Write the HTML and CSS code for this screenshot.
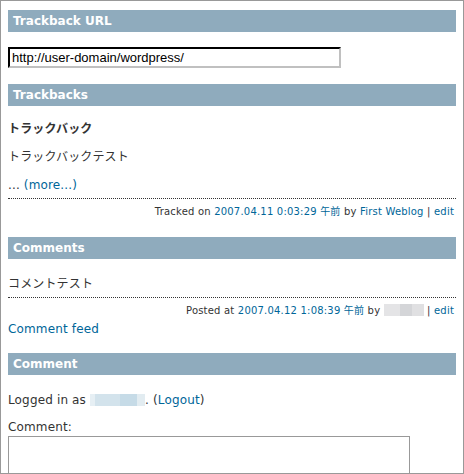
FILE: index.html
```html
<!DOCTYPE html>
<html>
<head>
<meta charset="utf-8">
<link rel="stylesheet" href="styles.css">
</head>
<body>
<div class="frame">
  <h3 class="bar first">Trackback URL</h3>
  <div class="url-row"><input class="url" type="text" value="http://user-domain/wordpress/"></div>

  <h3 class="bar">Trackbacks</h3>
  <div class="entry">
    <div class="tb-title">トラックバック</div>
    <div class="tb-text">トラックバックテスト</div>
    <div class="tb-more">... <a href="#">(more...)</a></div>
  </div>
  <div class="meta">Tracked on <a href="#">2007.04.11 0:03:29 午前</a> by <a href="#">First Weblog</a> | <a href="#">edit</a></div>

  <h3 class="bar">Comments</h3>
  <div class="entry">
    <div class="c-text">コメントテスト</div>
  </div>
  <div class="meta">Posted at <a href="#">2007.04.12 1:08:39 午前</a> by <span class="blur gray"></span> | <a href="#">edit</a></div>
  <div class="feed"><a href="#">Comment feed</a></div>

  <h3 class="bar">Comment</h3>
  <div class="logged">Logged in as <span class="blur blue"></span>. (<a href="#">Logout</a>)</div>
  <div class="label">Comment:</div>
  <textarea class="comment"></textarea>
</div>
</body>
</html>
```

FILE: styles.css
```css
html, body {
  margin: 0;
  padding: 0;
  background: #fff;
}
body {
  width: 464px;
  height: 474px;
  overflow: hidden;
}
.frame {
  box-sizing: border-box;
  width: 464px;
  height: 474px;
  border: 1px solid #999;
  padding: 9px 7px 0 7px;
  overflow: hidden;
  font-family: "DejaVu Sans", Verdana, "Noto Sans CJK JP", sans-serif;
  font-size: 12px;
  letter-spacing: 0.15px;
  color: #333;
}
a {
  color: #006699;
  text-decoration: none;
}
.bar {
  margin: 0;
  height: 22px;
  line-height: 22px;
  padding: 0 5px;
  background: #8fabbd;
  color: #fff;
  font-size: 12px;
  font-weight: bold;
  letter-spacing: 0;
}
.url-row {
  padding: 15px 0 16px;
  line-height: 0;
}
.url {
  box-sizing: border-box;
  width: 333px;
  height: 21px;
  margin: 0;
  padding: 0 2px;
  border: 2px inset #c0c0c0;
  border-top-color: #000;
  border-left-color: #000;
  border-right-color: #c0c0c0;
  border-bottom-color: #c0c0c0;
  font-family: "Liberation Sans", Arial, sans-serif;
  font-size: 13px;
  letter-spacing: 0;
  color: #000;
  outline: none;
}
.entry {
  border-bottom: 1px dotted #333;
  padding: 15px 0 5px;
  line-height: 16px;
}
.tb-title {
  font-weight: bold;
}
.tb-text, .tb-more {
  margin-top: 12px;
}
.c-text {
  margin-top: 2px;
}
.meta {
  text-align: right;
  font-size: 10px;
  letter-spacing: 0.2px;
  line-height: 13px;
  padding: 6px 2px 19px 0;
}
.meta + .feed {
  margin-top: -15px;
}
.feed {
  line-height: 16px;
  padding-bottom: 16px;
}
.logged {
  line-height: 16px;
  margin-top: 17px;
}
.label {
  line-height: 16px;
  margin-top: 11px;
}
.comment {
  display: block;
  box-sizing: border-box;
  width: 402px;
  height: 80px;
  margin: 1px 0 0;
  border: 1px solid #999;
  resize: none;
  outline: none;
}
.blur {
  display: inline-block;
  vertical-align: -2px;
  height: 12px;
}
.blur.gray {
  width: 40px;
  background: linear-gradient(90deg, #e4e4e6 0 40%, #d4d5d8 40% 70%, #e0e0e2 70% 100%);
}
.blur.blue {
  width: 55px;
  background: linear-gradient(90deg, #e6eff4 0 10%, #d3e3ec 10% 55%, #c6dbe7 55% 85%, #e2ecf1 85% 100%);
}
```
